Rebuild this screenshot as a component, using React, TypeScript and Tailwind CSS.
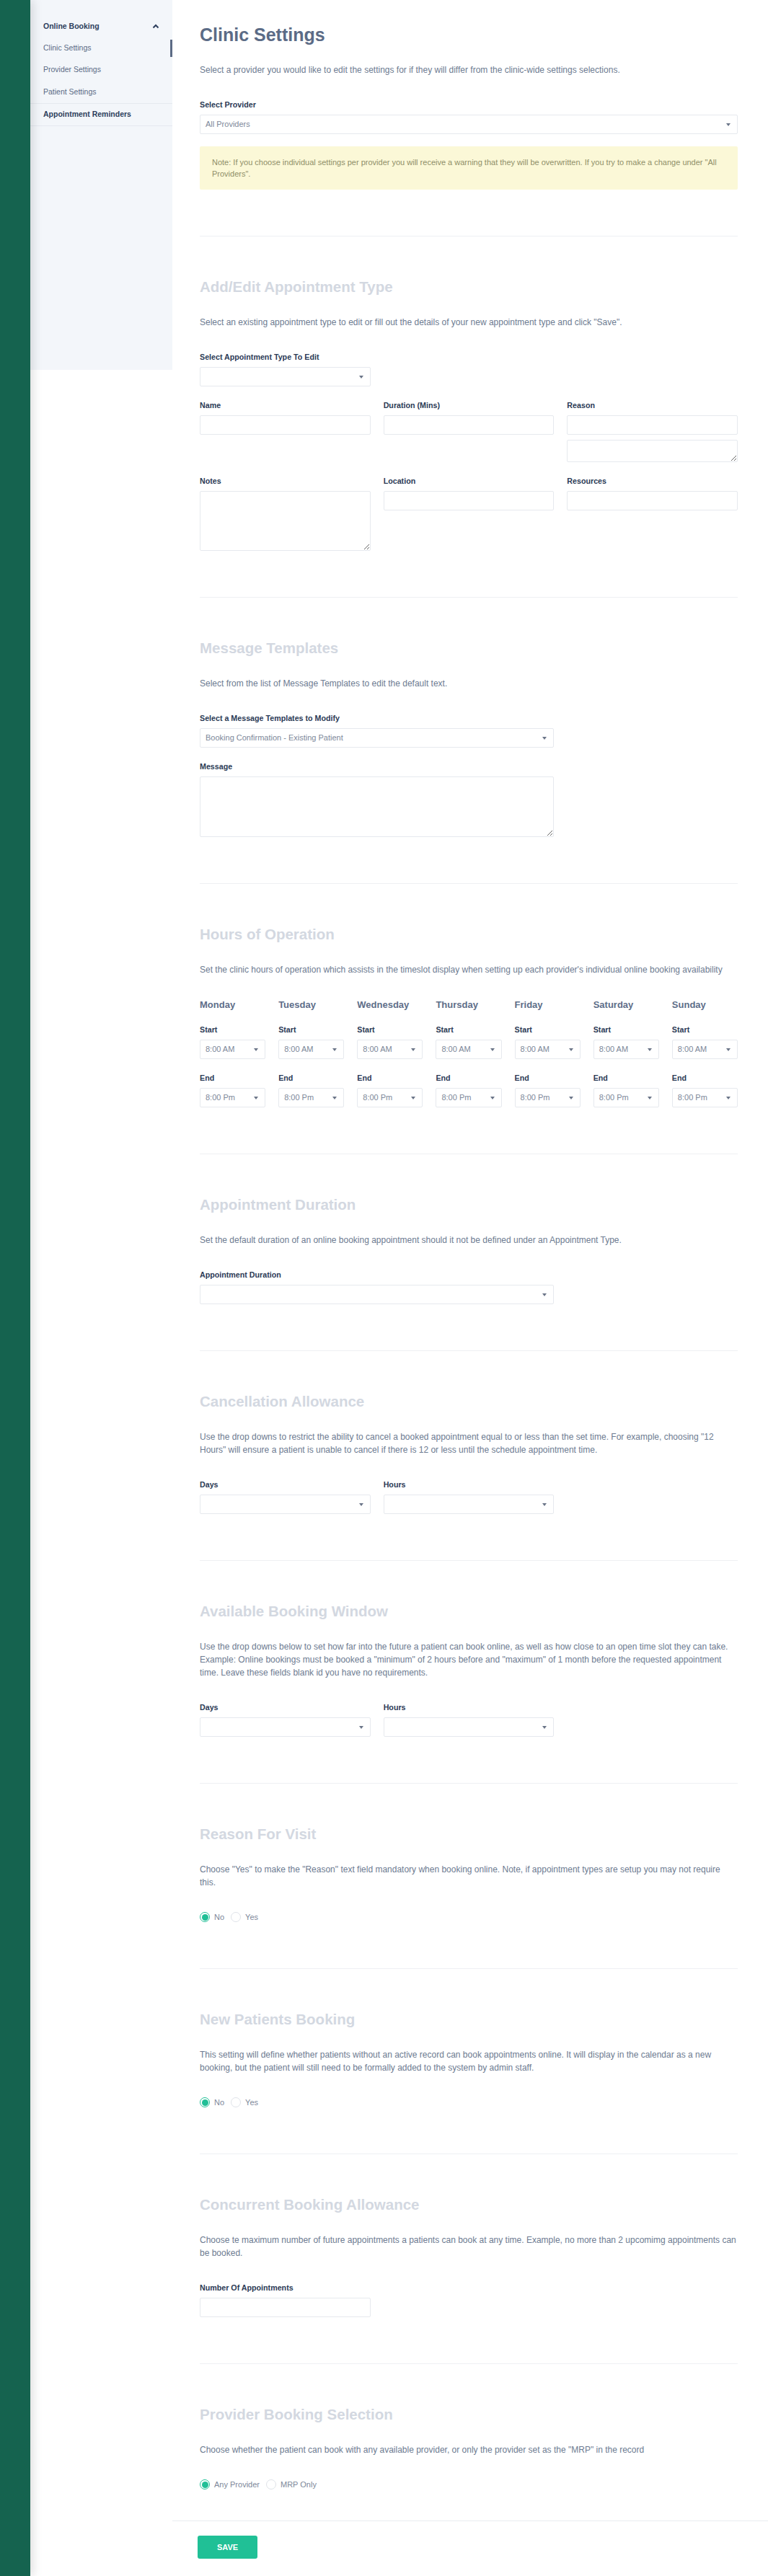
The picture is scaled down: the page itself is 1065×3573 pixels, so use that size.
import React from "react"

type SectionProps = {
  title: string
  desc?: React.ReactNode
  first?: boolean
  last?: boolean
  children?: React.ReactNode
}

function Caret() {
  return (
    <svg width="6" height="4" viewBox="0 0 6 4" className="shrink-0">
      <path d="M0 0 L6 0 L3 4 Z" fill="#6b7588" />
    </svg>
  )
}

function Label({ children }: { children: React.ReactNode }) {
  return (
    <div className="text-[10.7px] leading-[14px] font-bold text-[#2b3a55] mb-[7px]">{children}</div>
  )
}

function Select({ value }: { value?: string }) {
  return (
    <div className="h-[27px] border border-[#e6e9ee] rounded-[2px] bg-white flex items-center justify-between pl-[7px] pr-[9px]">
      <span className="text-[11px] text-[#7d889a]">{value}</span>
      <Caret />
    </div>
  )
}

function Input() {
  return <div className="h-[27px] border border-[#e6e9ee] rounded-[2px] bg-white" />
}

function TextArea({ h }: { h: string }) {
  return (
    <textarea
      className={`block w-full ${h} border border-[#e6e9ee] rounded-[2px] bg-white outline-none`}
    />
  )
}

function Radio({ checked, label }: { checked?: boolean; label: string }) {
  return (
    <div className="flex items-center h-[14px]">
      {checked ? (
        <span className="w-[14px] h-[14px] rounded-full border border-[#20bf96] flex items-center justify-center">
          <span className="w-[9px] h-[9px] rounded-full bg-[#20bf96]" />
        </span>
      ) : (
        <span className="w-[14px] h-[14px] rounded-full border border-[#dfe3e9]" />
      )}
      <span className="ml-[6px] mr-[9px] text-[11px] leading-[14px] text-[#7d889a]">{label}</span>
    </div>
  )
}

function Section({ title, desc, first, last, children }: SectionProps) {
  return (
    <section
      className={`${first ? "pt-[33px]" : "border-t border-[#eef0f3] pt-[55px]"} ${
        last ? "pb-[43px]" : "pb-16"
      }`}
    >
      <h2
        className={
          first
            ? "text-[25px] leading-[30px] font-bold text-[#5b6b86]"
            : "text-[20.5px] leading-[30px] font-bold text-[#d3d8e1]"
        }
      >
        {title}
      </h2>
      {desc && <p className="mt-[25px] text-[12px] leading-[18px] text-[#6d7b91]">{desc}</p>}
      <div className="mt-8">{children}</div>
    </section>
  )
}

const days = ["Monday", "Tuesday", "Wednesday", "Thursday", "Friday", "Saturday", "Sunday"]

export default function App() {
  return (
    <div className="min-h-screen flex bg-white font-['Liberation_Sans',Arial,sans-serif]">
      {/* green rail */}
      <div className="w-[42px] shrink-0 bg-[#15634f] relative z-10 shadow-[4px_0_14px_rgba(0,0,0,0.13)]" />

      {/* sub navigation */}
      <aside className="w-[197px] h-[513px] shrink-0 bg-[#f3f6fa] pt-[21px]">
        <div className="h-[31px] flex items-center justify-between pl-[18px] pr-[18px]">
          <span className="text-[10.5px] font-bold text-[#2d3e5c]">Online Booking</span>
          <svg width="10" height="7" viewBox="0 0 10 7">
            <polyline points="1.5,5.5 5,2 8.5,5.5" fill="none" stroke="#2d3e5c" strokeWidth="2" />
          </svg>
        </div>
        <div className="h-[30px] flex items-center justify-between pl-[18px]">
          <span className="text-[10.5px] text-[#5b6b85]">Clinic Settings</span>
          <span className="w-[3px] h-[24px] bg-[#5c6b85]" />
        </div>
        <div className="h-[30px] flex items-center pl-[18px]">
          <span className="text-[10.5px] text-[#5b6b85]">Provider Settings</span>
        </div>
        <div className="h-[31px] flex items-center pl-[18px]">
          <span className="text-[10.5px] text-[#5b6b85]">Patient Settings</span>
        </div>
        <div className="h-[32px] flex items-center pl-[18px] border-t border-b border-[#e5e9ef]">
          <span className="text-[10.5px] font-bold text-[#2d3e5c]">Appointment Reminders</span>
        </div>
      </aside>

      {/* main */}
      <main className="flex-1 flex flex-col min-w-0">
        <div className="pl-[38px] pr-[42px]">
          <Section
            first
            title="Clinic Settings"
            desc="Select a provider you would like to edit the settings for if they will differ from the clinic-wide settings selections."
          >
            <Label>Select Provider</Label>
            <div className="mt-[2px]">
              <Select value="All Providers" />
            </div>
            <div className="mt-[17px] bg-[#fbf8d7] rounded-[2px] px-[17px] py-[14px] text-[11px] leading-[16px] text-[#8f8f68]">
              Note: If you choose individual settings per provider you will receive a warning that they will be
              overwritten. If you try to make a change under "All Providers".
            </div>
          </Section>

          <Section
            title="Add/Edit Appointment Type"
            desc={'Select an existing appointment type to edit or fill out the details of your new appointment type and click "Save".'}
          >
            <div className="grid grid-cols-3 gap-x-[18px]">
              <div>
                <Label>Select Appointment Type To Edit</Label>
                <Select />
              </div>
            </div>
            <div className="grid grid-cols-3 gap-x-[18px] gap-y-[19px] mt-[19px] items-start">
              <div>
                <Label>Name</Label>
                <Input />
              </div>
              <div>
                <Label>Duration (Mins)</Label>
                <Input />
              </div>
              <div>
                <Label>Reason</Label>
                <Input />
                <div className="mt-[7px]">
                  <TextArea h="h-[31px]" />
                </div>
              </div>
              <div>
                <Label>Notes</Label>
                <TextArea h="h-[83px]" />
              </div>
              <div>
                <Label>Location</Label>
                <Input />
              </div>
              <div>
                <Label>Resources</Label>
                <Input />
              </div>
            </div>
          </Section>

          <Section title="Message Templates" desc="Select from the list of Message Templates to edit the default text.">
            <div className="grid grid-cols-3 gap-x-[18px]">
              <div className="col-span-2">
                <Label>Select a Message Templates to Modify</Label>
                <Select value="Booking Confirmation - Existing Patient" />
                <div className="mt-[19px]">
                  <Label>Message</Label>
                  <TextArea h="h-[84px]" />
                </div>
              </div>
            </div>
          </Section>

          <Section
            title="Hours of Operation"
            desc="Set the clinic hours of operation which assists in the timeslot display when setting up each provider's individual online booking availability"
          >
            <div className="grid grid-cols-7 gap-x-[18px] mt-px">
              {days.map((d) => (
                <div key={d}>
                  <div className="text-[13px] leading-[16px] font-bold text-[#5e6e89]">{d}</div>
                  <div className="mt-[19px]">
                    <Label>Start</Label>
                    <Select value="8:00 AM" />
                  </div>
                  <div className="mt-[19px]">
                    <Label>End</Label>
                    <Select value="8:00 Pm" />
                  </div>
                </div>
              ))}
            </div>
          </Section>

          <Section
            title="Appointment Duration"
            desc="Set the default duration of an online booking appointment should it not be defined under an Appointment Type."
          >
            <div className="grid grid-cols-3 gap-x-[18px]">
              <div className="col-span-2">
                <Label>Appointment Duration</Label>
                <Select />
              </div>
            </div>
          </Section>

          <Section
            title="Cancellation Allowance"
            desc={
              'Use the drop downs to restrict the ability to cancel a booked appointment equal to or less than the set time. For example, choosing "12 Hours" will ensure a patient is unable to cancel if there is 12 or less until the schedule appointment time.'
            }
          >
            <div className="grid grid-cols-3 gap-x-[18px]">
              <div>
                <Label>Days</Label>
                <Select />
              </div>
              <div>
                <Label>Hours</Label>
                <Select />
              </div>
            </div>
          </Section>

          <Section
            title="Available Booking Window"
            desc={
              'Use the drop downs below to set how far into the future a patient can book online, as well as how close to an open time slot they can take. Example: Online bookings must be booked a "minimum" of 2 hours before and "maximum" of 1 month before the requested appointment time. Leave these fields blank id you have no requirements.'
            }
          >
            <div className="grid grid-cols-3 gap-x-[18px]">
              <div>
                <Label>Days</Label>
                <Select />
              </div>
              <div>
                <Label>Hours</Label>
                <Select />
              </div>
            </div>
          </Section>

          <Section
            title="Reason For Visit"
            desc={
              'Choose "Yes" to make the "Reason" text field mandatory when booking online. Note, if appointment types are setup you may not require this.'
            }
          >
            <div className="flex items-center">
              <Radio checked label="No" />
              <Radio label="Yes" />
            </div>
          </Section>

          <Section
            title="New Patients Booking"
            desc="This setting will define whether patients without an active record can book appointments online. It will display in the calendar as a new booking, but the patient will still need to be formally added to the system by admin staff."
          >
            <div className="flex items-center">
              <Radio checked label="No" />
              <Radio label="Yes" />
            </div>
          </Section>

          <Section
            title="Concurrent Booking Allowance"
            desc="Choose te maximum number of future appointments a patients can book at any time. Example, no more than 2 upcomimg appointments can be booked."
          >
            <div className="grid grid-cols-3 gap-x-[18px]">
              <div>
                <Label>Number Of Appointments</Label>
                <Input />
              </div>
            </div>
          </Section>

          <Section
            last
            title="Provider Booking Selection"
            desc={'Choose whether the patient can book with any available provider, or only the provider set as the "MRP" in the record'}
          >
            <div className="flex items-center">
              <Radio checked label="Any Provider" />
              <Radio label="MRP Only" />
            </div>
          </Section>
        </div>

        {/* footer */}
        <div className="border-t border-[#e9ecf0] pt-[20px] pb-[21px] pl-[35px]">
          <button className="w-[83px] h-[32px] rounded-[3px] bg-[#20c096] text-white text-[11px] font-bold">
            SAVE
          </button>
        </div>
      </main>
    </div>
  )
}
